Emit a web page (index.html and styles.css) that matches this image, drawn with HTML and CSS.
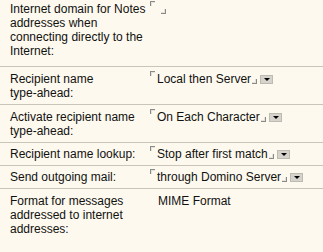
FILE: index.html
```html
<!DOCTYPE html>
<html lang="en">
<head>
    <meta charset="UTF-8" />
    <title>Mail settings</title>
    <link rel="stylesheet" href="styles.css">
</head>
<body>
<table class="settings">
    <tr class="row-first">
        <th>Internet domain for Notes addresses when connecting directly to the Internet:</th>
        <td><span class="mark tl"></span><span class="blank"></span><span class="mark br"></span></td>
    </tr>
    <tr>
        <th>Recipient name <span class="nw">type-ahead:</span></th>
        <td><span class="mark tl"></span><span class="val">Local then Server</span><span class="mark br"></span><span class="drop"></span></td>
    </tr>
    <tr>
        <th>Activate recipient name <span class="nw">type-ahead:</span></th>
        <td><span class="mark tl"></span><span class="val">On Each Character</span><span class="mark br"></span><span class="drop"></span></td>
    </tr>
    <tr class="row-single">
        <th>Recipient name lookup:</th>
        <td><span class="mark tl"></span><span class="val">Stop after first match</span><span class="mark br"></span><span class="drop"></span></td>
    </tr>
    <tr class="row-single">
        <th>Send outgoing mail:</th>
        <td><span class="mark tl"></span><span class="val">through Domino Server</span><span class="mark br"></span><span class="drop"></span></td>
    </tr>
    <tr class="row-last">
        <th>Format for messages addressed to internet addresses:</th>
        <td><span class="plain">MIME Format</span></td>
    </tr>
</table>
</body>
</html>
```

FILE: styles.css
```css
* {
    box-sizing: border-box;
}
body {
    margin: 0;
    background: #fdf9ee;
    font-family: 'Liberation Sans', Arial, sans-serif;
    font-size: 12px;
    line-height: 14px;
    color: #111;
}
.settings {
    width: 100%;
    border-collapse: collapse;
}
.settings th,
.settings td {
    vertical-align: top;
    text-align: left;
    font-weight: normal;
    padding: 5px 0 4px 0;
    border-bottom: 1px solid #c9c5b9;
}
.settings th {
    width: 150px;
    padding-left: 10px;
    padding-right: 2px;
}
.settings td {
    padding-left: 0;
    white-space: nowrap;
}
.nw {
    white-space: nowrap;
}
.row-first th,
.row-first td {
    padding-top: 2px;
    padding-bottom: 8px;
}
.row-single th,
.row-single td {
    padding-top: 4px;
    padding-bottom: 4px;
}
.row-last th,
.row-last td {
    border-bottom: none;
}
.mark {
    display: inline-block;
    width: 5px;
    height: 5px;
}
.mark.tl {
    vertical-align: top;
    margin-top: -1px;
    border-top: 1px solid #8c8a84;
    border-left: 1px solid #8c8a84;
    box-shadow: inset 1px 1px 0 #e4e2dc;
}
.mark.br {
    vertical-align: -1px;
    margin-left: 1px;
    border-bottom: 1px solid #8c8a84;
    border-right: 1px solid #8c8a84;
    box-shadow: inset -1px -1px 0 #e4e2dc;
}
.blank {
    display: inline-block;
    width: 5px;
}
.val {
    margin-left: 2px;
}
.plain {
    margin-left: 8px;
}
.drop {
    display: inline-block;
    width: 13px;
    height: 9px;
    margin-left: 3px;
    vertical-align: -1px;
    background: #d6d3cc;
    border: 1px solid #bdbab2;
    position: relative;
}
.drop::after {
    content: "";
    position: absolute;
    left: 3px;
    top: 2px;
    border-left: 3px solid transparent;
    border-right: 3px solid transparent;
    border-top: 3px solid #000;
}
```
